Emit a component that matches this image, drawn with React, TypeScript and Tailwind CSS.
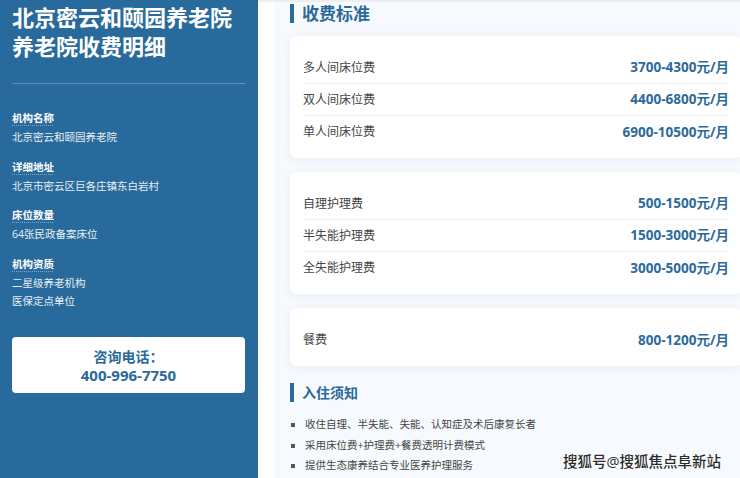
const font = { fontFamily: '"Open Sans", "Noto Sans CJK SC", sans-serif' };

const info = [
  { label: '机构名称', values: ['北京密云和颐园养老院'] },
  { label: '详细地址', values: ['北京市密云区巨各庄镇东白岩村'] },
  { label: '床位数量', values: ['64张民政备案床位'] },
  { label: '机构资质', values: ['二星级养老机构', '医保定点单位'] },
];

const groups = [
  [
    ['多人间床位费', '3700-4300元/月'],
    ['双人间床位费', '4400-6800元/月'],
    ['单人间床位费', '6900-10500元/月'],
  ],
  [
    ['自理护理费', '500-1500元/月'],
    ['半失能护理费', '1500-3000元/月'],
    ['全失能护理费', '3000-5000元/月'],
  ],
  [['餐费', '800-1200元/月']],
];

const notes = [
  '收住自理、半失能、失能、认知症及术后康复长者',
  '采用床位费+护理费+餐费透明计费模式',
  '提供生态康养结合专业医养护理服务',
];

const Heading = ({ children, size }: { children: string; size: string }) => (
  <div className="flex h-[21px] items-center gap-[8px]">
    <span className="h-[19px] w-[4px] bg-[#2a6a9b]" />
    <h2 className={`${size} font-bold leading-[21px] text-[#2a6a9b]`}>{children}</h2>
  </div>
);

export default function App() {
  return (
    <div className="relative flex h-[478px] w-[740px] overflow-hidden bg-white" style={font}>
      <aside className="flex w-[258px] shrink-0 flex-col bg-[#286a9c] px-[12px] pt-[3px] text-white">
        <h1 className="text-[22px] font-bold leading-[29px]">
          北京密云和颐园养老院
          <br />
          养老院收费明细
        </h1>
        <div className="mt-[22px] h-px w-[233px] bg-white/25" />
        <div className="mt-[25px] flex flex-col gap-[11px]">
          {info.map((g) => (
            <div key={g.label}>
              <div className="text-[10.5px] font-bold leading-[19px]">
                <span className="underline decoration-white/40 decoration-dotted underline-offset-[3px]">{g.label}</span>
              </div>
              {g.values.map((v) => (
                <div key={v} className="text-[10.5px] leading-[18.5px] text-white/90">
                  {v}
                </div>
              ))}
            </div>
          ))}
        </div>
        <div className="mt-[26px] w-[233px] rounded-[4px] bg-white pb-[8px] pt-[10px] text-center font-bold text-[#2a6a9b]">
          <div className="text-[14px] leading-[19px]">咨询电话：</div>
          <div className="text-[15px] leading-[19px]">400-996-7750</div>
        </div>
      </aside>

      <div className="w-[16px] shrink-0 border-t-2 border-[#eceef1]" />

      <main className="flex-1 border-t-2 border-[#eceef1] bg-[#f6f9fd] pl-[16px] pt-[1px]">
        <Heading size="text-[17px]">收费标准</Heading>
        <div className="mt-[12px] flex w-[452px] flex-col gap-[14px]">
          {groups.map((rows, i) => (
            <div key={i} className="rounded-[6px] bg-white px-[13px] pb-[10px] pt-[16px] shadow-[0_2px_8px_rgba(40,106,156,0.07)]">
              {rows.map(([name, price], j) => (
                <div
                  key={name}
                  className={`flex h-[32px] items-center justify-between ${j < rows.length - 1 ? 'border-b border-[#eef1f4]' : ''}`}
                >
                  <span className="text-[12px] text-[#444]">{name}</span>
                  <span className="text-[13.5px] font-bold text-[#2c6b9c]">{price}</span>
                </div>
              ))}
            </div>
          ))}
        </div>
        <div className="mt-[16px]">
          <Heading size="text-[14px]">入住须知</Heading>
        </div>
        <ul className="mt-[12px] flex flex-col">
          {notes.map((n) => (
            <li key={n} className="flex h-[20.5px] items-center text-[10.5px] text-[#444]">
              <span className="mr-[10px] ml-px h-[4px] w-[4px] bg-[#555]" />
              {n}
            </li>
          ))}
        </ul>
      </main>

      <div
        className="absolute left-[563px] top-[451px] text-[14.5px] font-medium text-[#2b2b2b]"
        style={{ textShadow: '0 0 2px #fff, 0 0 2px #fff' }}
      >
        搜狐号@搜狐焦点阜新站
      </div>
    </div>
  );
}
